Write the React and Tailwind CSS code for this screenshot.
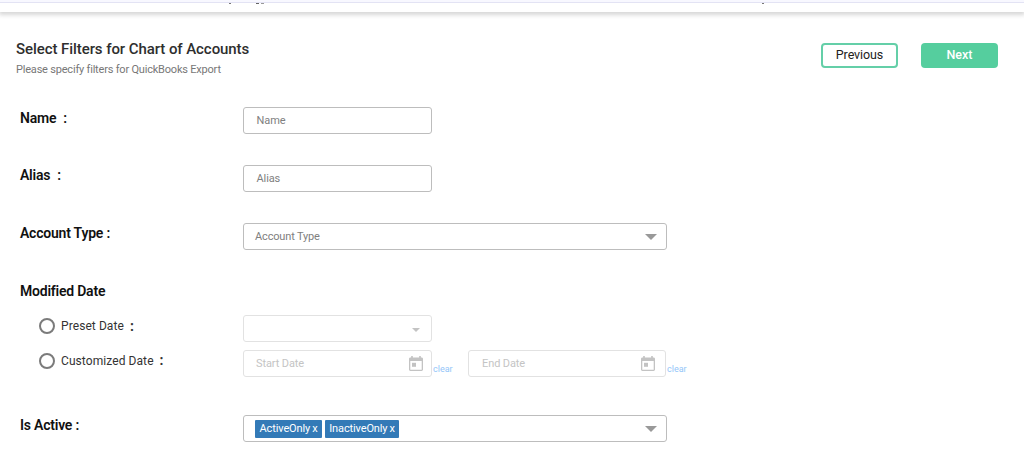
import React from "react";

const Caret = ({ className }) => (
  <svg viewBox="0 0 12 6" preserveAspectRatio="none" className={className}>
    <path d="M0 0h12L6 6z" fill="currentColor" />
  </svg>
);

const CalendarIcon = () => (
  <svg viewBox="0 0 14 15" className="h-[15px] w-[14px] text-[#c3c3c3]">
    <path d="M2.2 0h1.6v1.4h6.4V0h1.6v1.4H12.6c.8 0 1.4.6 1.4 1.4v10.8c0 .8-.6 1.4-1.4 1.4H1.4C.6 15 0 14.400 0 13.600V2.800c0-.8.6-1.4 1.400-1.400h.8zM1.300 5v8.700h11.400V5z" fill="currentColor" fillRule="evenodd" />
    <path d="M3 6.800h4v4H3z" fill="currentColor" />
  </svg>
);

const Row = ({ label, className = "h-[27px] mb-[31px]", labelClassName = "", children }) => (
  <div className={`flex items-start pl-5 ${className}`}>
    <div className={`w-[223px] shrink-0 text-[14px] leading-5 font-semibold tracking-[-0.22px] text-[#111] ${labelClassName}`}>{label}</div>
    {children}
  </div>
);

const TextField = ({ children }) => (
  <div className="flex h-[27px] w-[189px] items-center rounded-[3px] border border-[#bdbdbd] pt-[2px] pl-[12.500px] text-[11px] tracking-[-0.1px] text-[#808080]">
    {children}
  </div>
);

const DateField = ({ className, placeholder }) => (
  <>
    <div className={`flex h-[27px] items-center justify-between rounded-[3px] border border-[#e2e2e2] text-[11px] text-[#c4c4c4] ${className}`}>
      <span className="pt-[2px] tracking-[-0.1px]">{placeholder}</span>
      <CalendarIcon />
    </div>
    <span className="ml-px w-[21px] pt-[13px] text-[9px] leading-3 text-[#93c6f9]">clear</span>
  </>
);

const Radio = () => (
  <span className="mr-[6px] h-4 w-4 shrink-0 rounded-full border-2 border-[#7b7b7b]" />
);

const Tag = ({ children, className }) => (
  <span className={`flex h-[18px] items-center justify-center rounded-[1px] bg-[#337ab7] pt-[2px] text-[11px] tracking-[-0.12px] text-white ${className}`}>
    {children}<span className="ml-[2px]">x</span>
  </span>
);

export default function App() {
  return (
    <div className="h-[452px] w-[1024px] overflow-hidden bg-white font-['Roboto','Liberation_Sans',sans-serif]">
      <div className="h-3 bg-white shadow-[0_2px_4px_1px_rgba(0,0,0,0.16)]">
        <div className="h-[3px] border-b border-[#e3e3f4] bg-[#f8f8ff]" />
        <div className="flex h-px pl-[229px]">
          <i className="w-[2px] bg-[#777]" />
          <i className="ml-[25px] w-[3px] bg-[#666]" />
          <i className="ml-[2px] w-[3px] bg-[#999]" />
          <i className="ml-[498px] w-[2px] bg-[#777]" />
        </div>
      </div>
      <header className="flex h-[95px] items-start pt-[27px] pl-4">
        <div className="w-[805px]">
          <h1 className="text-[15px] leading-5 font-medium tracking-[-0.07px] text-[#2e2e2e]">Select Filters for Chart of Accounts</h1>
          <p className="pt-px text-[11px] leading-5 tracking-[-0.2px] text-[#777]">Please specify filters for QuickBooks Export</p>
        </div>
        <button className="mt-1 h-[25px] w-[77px] rounded-[4px] border-2 border-[#64cfa8] text-[12.500px] tracking-[-0.1px] text-[#222]">Previous</button>
        <button className="mt-1 ml-[23px] h-[25px] w-[77px] rounded-[4px] bg-[#55ce9e] text-[12.500px] font-medium text-white">Next</button>
      </header>
      <main>
        <Row labelClassName="pt-px" label={<>Name<span className="ml-[7px]">:</span></>}>
          <TextField>Name</TextField>
        </Row>
        <Row label={<>Alias<span className="ml-[7px]">:</span></>}>
          <TextField>Alias</TextField>
        </Row>
        <Row label="Account Type :">
          <div className="flex h-[27px] w-[424px] items-center justify-between rounded-[3px] border border-[#bdbdbd] pr-[9px] pl-[11px] text-[11px] text-[#808080]">
            <span className="pt-[2px] tracking-[-0.15px]">Account Type</span>
            <Caret className="h-[6px] w-3 text-[#999]" />
          </div>
        </Row>
        <Row label="Modified Date" className="h-[34px]" />
        <div className="mb-2 flex h-[27px] pl-[39px]">
          <div className="flex h-[22px] w-[204px] items-center text-[12px] text-[#333]">
            <Radio /><span className="tracking-[0.08px]">Preset Date</span><b className="ml-[6px] text-[14px]">:</b>
          </div>
          <div className="flex h-[27px] w-[189px] items-center justify-end rounded-[3px] border border-[#e2e2e2] pt-[3px] pr-[11px]">
            <Caret className="h-1 w-2 text-[#c3c3c3]" />
          </div>
        </div>
        <div className="mb-[38px] flex h-[27px] pl-[39px]">
          <div className="flex h-[21px] w-[204px] items-center text-[12px] text-[#333]">
            <Radio /><span className="tracking-[0.08px]">Customized Date</span><b className="ml-[6px] text-[14px]">:</b>
          </div>
          <DateField className="w-[189px] pr-2 pl-3" placeholder="Start Date" />
          <div className="w-[14px]" />
          <DateField className="w-[198px] pr-[10px] pl-[13px]" placeholder="End Date" />
        </div>
        <Row label="Is Active :" className="h-[27px]">
          <div className="flex h-[27px] w-[424px] items-center rounded-[3px] border border-[#bdbdbd] pr-[9px] pl-[11px]">
            <Tag className="mr-[3px] w-[67px]">ActiveOnly</Tag>
            <Tag className="w-[74px]">InactiveOnly</Tag>
            <Caret className="ml-auto h-[6px] w-3 text-[#999]" />
          </div>
        </Row>
      </main>
    </div>
  );
}
